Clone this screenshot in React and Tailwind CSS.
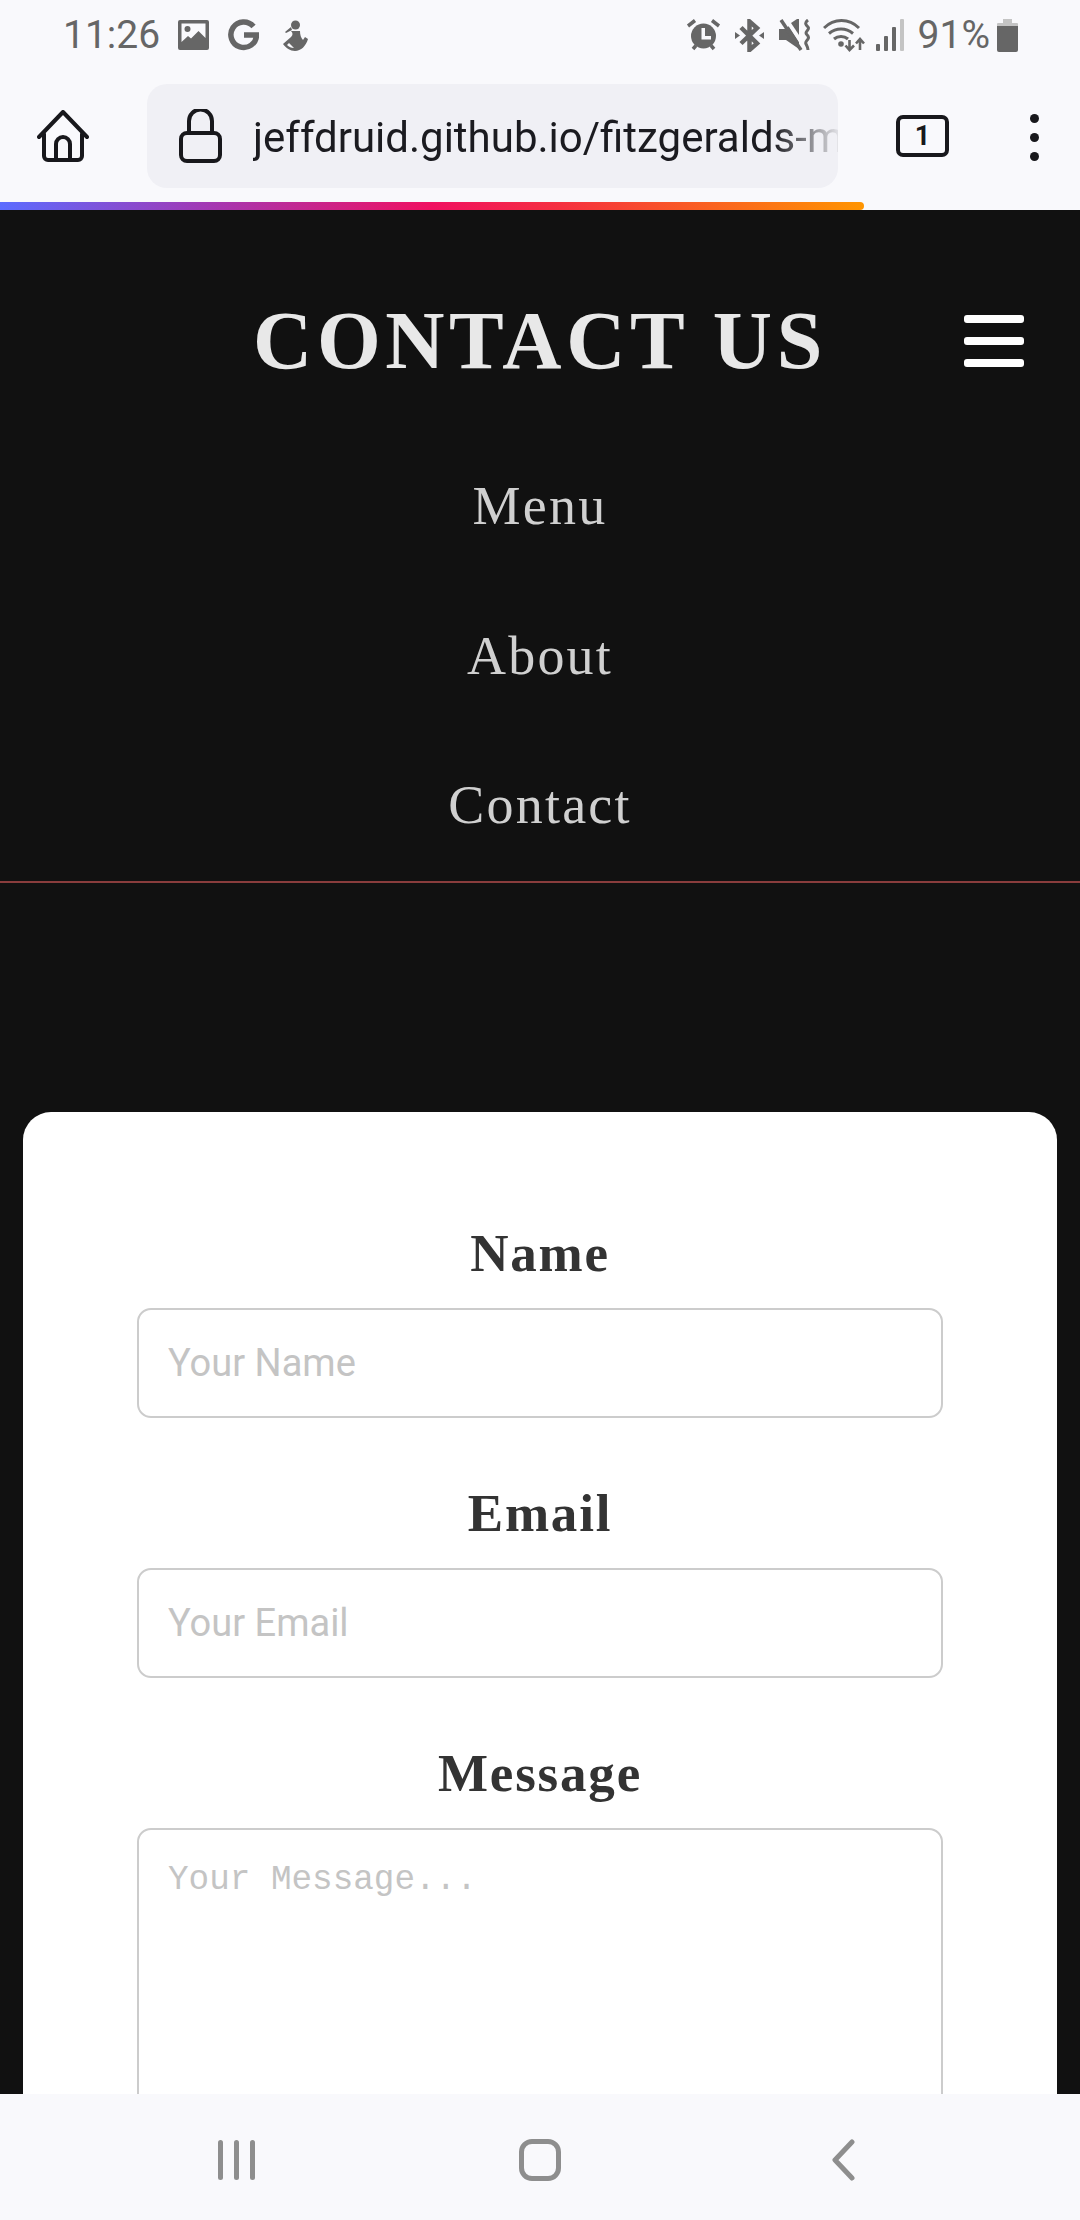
const ROBOTO = "font-['Roboto',sans-serif]";

function StatusBar() {
  return (
    <div className={`h-[70px] flex items-center pl-[63px] pr-[62px] text-[#666] fill-[#666] ${ROBOTO}`}>
      <span className="text-[39px] leading-none w-[115px]">11:26</span>
      {/* gallery */}
      <svg className="w-[31px] h-[30px] mr-[19px]" viewBox="0 0 31 30">
        <path fillRule="evenodd" d="M2 0h27a2 2 0 0 1 2 2v26a2 2 0 0 1-2 2H2a2 2 0 0 1-2-2V2a2 2 0 0 1 2-2zm1.500 3.500v18.500l6.500-6 3 2.500 7.500-7.500 7 7V3.500z" />
        <circle cx="9.500" cy="9" r="3" />
      </svg>
      {/* G */}
      <svg className="w-[31px] h-[32px] mr-[22px]" viewBox="0 0 31 32" fill="none" stroke="#666" strokeWidth="5.500">
        <path d="M25.500 7.500A12.800 12.800 0 1 0 28.500 16H16" />
      </svg>
      {/* figure app icon */}
      <svg className="w-[27px] h-[31px]" viewBox="0 0 27 31">
        <circle cx="14.500" cy="5" r="4.500" />
        <path d="M10 7L4 12l1 1 6-3zM10 11h9c0 4 1 7 3 9l2-3 3 2c-2 7-7 12-13 12-5 0-9-3-12-7l8-7c2-2 2-4 0-6z" />
        <path d="M8 23l-2 2c2 2 4 3 7 3z" fill="#f9f9fc" />
      </svg>
      <div className="flex-1" />
      {/* alarm */}
      <svg className="w-[35px] h-[32px] mr-[14px]" viewBox="0 0 35 32">
        <path d="M2 7l7-5.500M33 7l-7-5.500M7 30l3-3.500M28 30l-3-3.500" stroke="#666" strokeWidth="3.500" fill="none" />
        <circle cx="17.500" cy="17" r="12.500" />
        <path d="M15.500 9h3.500v8h6v3.500h-9.500z" fill="#f9f9fc" />
      </svg>
      {/* bluetooth */}
      <svg className="w-[29px] h-[33px] mr-[15px]" viewBox="0 0 29 33" fill="none" stroke="#666" strokeWidth="4.500">
        <path d="M6 8.500l16 16L14.500 31V2.500L22 9 6 24.500" />
        <path d="M0 13l5 3.500-5 3.500zM29 13l-5 3.500 5 3.500z" fill="#666" stroke="none" />
      </svg>
      {/* muted / vibrate */}
      <svg className="w-[32px] h-[32px] mr-[12px]" viewBox="0 0 32 32">
        <path d="M0 10h6l4-3 10 16v7L7 21H0z" />
        <path d="M12 4l6-4h2v16z" />
        <path d="M2 1l20 30" stroke="#666" strokeWidth="3.500" />
        <path d="M6 0l20 30" stroke="#f9f9fc" strokeWidth="2" />
        <path d="M29 1c-4 3-2 5 0 7s-2 4-2 6 4 3 2 6-3 3-2 5 2 3 2 6" fill="none" stroke="#666" strokeWidth="3" />
      </svg>
      {/* wifi with arrows */}
      <svg className="w-[42px] h-[34px] mr-[11px]" viewBox="0 0 42 34" fill="none" stroke="#666" strokeWidth="3">
        <path d="M1 10C11 0 26 0 36 10M6 15.500c7-6 17-6 24 0M11 21c4-3.500 10-3.500 14 0" />
        <circle cx="18" cy="26" r="2.800" fill="#666" stroke="none" />
        <path d="M26.500 22v10M22.500 27.500l4 4.500 4.500-4.500M37 32V21M33 25.500l4-4.500 4 4.500" strokeWidth="2.600" />
      </svg>
      {/* signal */}
      <svg className="w-[28px] h-[32px] mr-[14px]" viewBox="0 0 28 32">
        <rect x="0" y="25" width="4" height="7" rx="1" />
        <rect x="8" y="17" width="4" height="15" rx="1" />
        <rect x="16" y="8" width="4" height="24" rx="1" />
        <rect x="24" y="0" width="4" height="32" rx="1" fill="#c4c4c4" />
      </svg>
      <span className="text-[39px] leading-none mr-[7px]">91%</span>
      {/* battery */}
      <svg className="w-[21px] h-[33px]" viewBox="0 0 21 33">
        <path d="M6 0h9v4H6z" fill="#c4c4c4" />
        <path d="M1 4h19a1 1 0 0 1 1 1v3H0V5a1 1 0 0 1 1-1z" fill="#c4c4c4" />
        <path d="M0 7h21v24a2 2 0 0 1-2 2H2a2 2 0 0 1-2-2z" />
      </svg>
    </div>
  );
}

function Toolbar() {
  return (
    <div className="h-[132px] flex items-center">
      <svg className="w-[52px] h-[52px] ml-[37px] mr-[58px]" viewBox="0 0 52 52" fill="none" stroke="#18181c" strokeWidth="4" strokeLinejoin="round" strokeLinecap="round">
        <path d="M2 27L26 2l24 25" />
        <path d="M7 24v22a4 4 0 0 0 4 4h30a4 4 0 0 0 4-4V24" />
        <path d="M19 50V34a7 7 0 0 1 14 0v16" />
      </svg>
      <div className={`w-[691px] h-[104px] rounded-[20px] bg-[#f0f0f5] flex items-center pl-[32px] ${ROBOTO}`}>
        <svg className="w-[43px] h-[54px] shrink-0 mr-[31px]" viewBox="0 0 43 54" fill="none" stroke="#18181c" strokeWidth="4">
          <rect x="2" y="24" width="39" height="28" rx="6" />
          <path d="M10 24V12a11 11 0 0 1 23 0v12" />
        </svg>
        {/* address fades out at the pill's edge, as in the browser */}
        <span className="w-[585px] pt-[4px] text-[42px] leading-[56px] whitespace-nowrap overflow-hidden text-[#1b1b20] [mask-image:linear-gradient(to_right,black_520px,transparent_590px)]">
          jeffdruid.github.io/fitzgeralds-m
        </span>
      </div>
      <div className={`w-[53px] h-[42px] ml-[58px] border-[4px] border-[#18181c] rounded-[7px] flex items-center justify-center text-[27px] font-bold text-[#18181c] leading-none ${ROBOTO}`}>
        1
      </div>
      <div className="ml-[81px] mt-[2px] flex flex-col gap-[10px]">
        <span className="w-[9px] h-[9px] rounded-full bg-[#18181c]" />
        <span className="w-[9px] h-[9px] rounded-full bg-[#18181c]" />
        <span className="w-[9px] h-[9px] rounded-full bg-[#18181c]" />
      </div>
    </div>
  );
}

function Field({ label, placeholder }) {
  return (
    <div className="mb-[66px]">
      <label className="h-[60px] mb-[24px] flex items-center justify-center text-[53px] font-bold tracking-[1.800px] text-[#333]">{label}</label>
      <input
        placeholder={placeholder}
        className={`block w-full h-[110px] px-[29px] border-2 border-[#ccc] rounded-[14px] text-[38px] outline-none placeholder:text-[#c4c4c4] ${ROBOTO}`}
      />
    </div>
  );
}

export default function App() {
  return (
    <div className="h-[2220px] flex flex-col overflow-hidden bg-[#f9f9fc]">
      <StatusBar />
      <Toolbar />
      <div className="h-[8px] w-[864px] rounded-r-[4px] bg-[linear-gradient(to_right,#5b6cff,#a636b0_25%,#f01060_50%,#f5303f_65%,#ff9500)]" />
      <main className="flex-1 min-h-0 overflow-hidden bg-[#111] font-['Liberation_Serif',serif]">
        <header className="grid grid-cols-[1fr_auto_1fr] items-center h-[100px] mt-[81px] mb-[41px]">
          <div />
          <h1 className="text-[82px] font-bold leading-none tracking-[4.600px] text-[#e8e8e8]">CONTACT US</h1>
          <div className="flex justify-end pr-[56px]">
            <div className="w-[60px] flex flex-col gap-[14px]">
              <span className="h-[8px] rounded-[3px] bg-white" />
              <span className="h-[8px] rounded-[3px] bg-white" />
              <span className="h-[8px] rounded-[3px] bg-white" />
            </div>
          </div>
        </header>
        <nav className="border-b-2 border-[#8a3d3d]">
          {["Menu", "About", "Contact"].map((item) => (
            <div key={item} className="h-[149.500px] flex items-center justify-center text-[54px] tracking-[2.200px] text-[#d0d0d0]">{item}</div>
          ))}
        </nav>
        <section className="mt-[229px] mx-[23px] bg-white rounded-t-[28px] px-[114px] pt-[112px]">
          <Field label="Name" placeholder="Your Name" />
          <Field label="Email" placeholder="Your Email" />
          <label className="h-[60px] mb-[24px] flex items-center justify-center text-[53px] font-bold tracking-[1.800px] text-[#333]">Message</label>
          <textarea
            placeholder="Your Message..."
            className="block w-full h-[400px] px-[29px] pt-[30px] border-2 border-[#ccc] rounded-[14px] text-[34.300px] leading-[40px] outline-none resize-none placeholder:text-[#c4c4c4] font-['Liberation_Mono',monospace]"
          />
        </section>
      </main>
      <div className="h-[126px] flex items-center pt-[6px]">
        <div className="ml-[218px] flex gap-[11px]">
          <span className="w-[5px] h-[40px] rounded-full bg-[#8e8e8e]" />
          <span className="w-[5px] h-[40px] rounded-full bg-[#8e8e8e]" />
          <span className="w-[5px] h-[40px] rounded-full bg-[#8e8e8e]" />
        </div>
        <div className="ml-[264px] w-[42px] h-[42px] border-[5px] border-[#8e8e8e] rounded-[13px]" />
        <svg className="ml-[270px] w-[24px] h-[42px]" viewBox="0 0 24 42" fill="none" stroke="#8e8e8e" strokeWidth="5" strokeLinecap="round" strokeLinejoin="round">
          <path d="M21 3L4 21l17 18" />
        </svg>
      </div>
    </div>
  );
}
